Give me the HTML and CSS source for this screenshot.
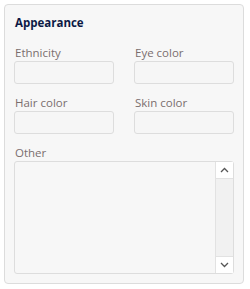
FILE: index.html
```html
<html>
    <head>
        <link rel="stylesheet" href="styles.css">
    </head>
    <body>
        <div class="panel">
            <div class="title">Appearance</div>
            <div class="fields">
                <div class="field">
                    <label>Ethnicity</label>
                    <div class="box"></div>
                </div>
                <div class="field">
                    <label>Eye color</label>
                    <div class="box"></div>
                </div>
                <div class="field">
                    <label>Hair color</label>
                    <div class="box"></div>
                </div>
                <div class="field">
                    <label>Skin color</label>
                    <div class="box"></div>
                </div>
                <div class="field wide">
                    <label>Other</label>
                    <div class="area">
                        <div class="area-text"></div>
                        <div class="scroll">
                            <div class="arrow">
                                <svg width="9" height="6" viewBox="0 0 9 6"><path d="M1 5 L4.5 1.5 L8 5" fill="none" stroke="#555" stroke-width="1.3"/></svg>
                            </div>
                            <div class="track"></div>
                            <div class="arrow">
                                <svg width="9" height="6" viewBox="0 0 9 6"><path d="M1 1 L4.5 4.5 L8 1" fill="none" stroke="#555" stroke-width="1.3"/></svg>
                            </div>
                        </div>
                    </div>
                </div>
            </div>
        </div>
    </body>
</html>
```

FILE: styles.css
```css
body {
    margin: 0;
    background: #ffffff;
    font-family: "Open Sans", "Noto Sans", sans-serif;
}
.panel {
    margin: 4px;
    width: 240px;
    height: 280px;
    box-sizing: border-box;
    border: 1px solid #dcdcdc;
    border-radius: 4px;
    background: #f7f7f7;
    padding: 10px 9px 0 9px;
}
.title {
    font-size: 11.5px;
    font-weight: bold;
    color: #0c1a45;
    line-height: 16px;
    padding-left: 1px;
    margin-bottom: 14px;
}
.fields {
    display: grid;
    grid-template-columns: 100px 100px;
    column-gap: 20px;
    row-gap: 11px;
}
.field label {
    display: block;
    font-size: 11.5px;
    color: #7a6e6e;
    line-height: 16px;
    padding-left: 1px;
}
.box {
    height: 23px;
    box-sizing: border-box;
    border: 1px solid #dddddd;
    border-radius: 3px;
    background: #f6f6f6;
}
.wide {
    grid-column: 1 / 3;
}
.area {
    display: flex;
    height: 113px;
    box-sizing: border-box;
    border: 1px solid #dddddd;
    border-radius: 3px;
    background: #f7f7f7;
}
.area-text {
    flex: 1;
}
.scroll {
    width: 17px;
    display: flex;
    flex-direction: column;
    border-left: 1px solid #e2e2e2;
}
.arrow {
    height: 16px;
    background: #ffffff;
    display: flex;
    align-items: center;
    justify-content: center;
}
.track {
    flex: 1;
    background: #f1f1f1;
    border-top: 1px solid #e2e2e2;
    border-bottom: 1px solid #e2e2e2;
}
```
